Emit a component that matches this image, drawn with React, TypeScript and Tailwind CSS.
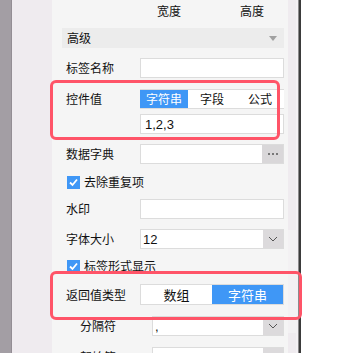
import type { ReactNode } from 'react'

function Chevron() {
  return (
    <svg width="10" height="6" viewBox="0 0 10 6" fill="none">
      <path d="M1 1l4 4 4-4" stroke="#555" strokeWidth="1" />
    </svg>
  )
}

function Row({ label, className, labelClass, children }: { label: string; className: string; labelClass: string; children: ReactNode }) {
  return (
    <div className={`flex items-center ${className}`}>
      <span className={`shrink-0 ${labelClass}`}>{label}</span>
      {children}
    </div>
  )
}

function Input({ text }: { text?: string }) {
  return (
    <div className="flex h-[20px] w-[144px] items-center border border-[#dcdcdc] bg-white pl-[4px] font-['Liberation_Sans',sans-serif] text-[13px]">
      {text}
    </div>
  )
}

function Select({ text, width }: { text: string; width: string }) {
  return (
    <div className={`flex h-[20px] items-stretch border border-[#dcdcdc] bg-white ${width}`}>
      <span className="flex flex-1 items-center pl-[2px] font-['Liberation_Sans',sans-serif] text-[13px]">{text}</span>
      <span className="flex w-[20px] items-center justify-center bg-[#dcdadc]">
        <Chevron />
      </span>
    </div>
  )
}

function Check({ label, className }: { label: string; className: string }) {
  return (
    <div className={`flex h-[24px] items-center pl-[5px] ${className}`}>
      <span className="flex h-[13px] w-[13px] items-center justify-center bg-[#3f97f6]">
        <svg width="11" height="11" viewBox="0 0 11 11" fill="none">
          <path d="M2 5.5l2.5 2.5L9 2.5" stroke="white" strokeWidth="1.8" />
        </svg>
      </span>
      <span className="ml-[4px]">{label}</span>
    </div>
  )
}

export default function App() {
  return (
    <div className="relative flex h-[353px] w-[357px] overflow-hidden bg-white font-['Noto_Sans_CJK_SC','Liberation_Sans',sans-serif] text-[12px] leading-none text-[#111]">
      <div className="w-[11px] bg-[#a39ea4]" />
      <div className="w-[1px] bg-[#938d94]" />
      <div className="w-[40px] bg-[#efebef]" />

      {/* property panel */}
      <div className="w-[236px] bg-[#f5f5f5] pl-[10px] pr-[4px]">
        <div className="flex h-[22px] items-center">
          <span className="ml-[95px]">宽度</span>
          <span className="ml-[59px]">高度</span>
        </div>

        <div className="mt-[6px] flex h-[20px] items-center justify-between bg-[#ececec] pl-[5px] pr-[7px]">
          <span>高级</span>
          <svg width="8" height="5" viewBox="0 0 8 5">
            <path d="M0 0h8L4 5z" fill="#a0a0a0" />
          </svg>
        </div>

        <Row label="标签名称" className="mt-[10px]" labelClass="w-[78px] pl-[4px]">
          <Input />
        </Row>

        <Row label="控件值" className="mt-[11px]" labelClass="w-[78px] pl-[4px]">
          <div className="grid h-[20px] w-[144px] grid-cols-3 border-y border-[#dcdcdc] bg-white">
            <span className="flex items-center justify-center bg-[#3f97f6] text-white">字符串</span>
            <span className="flex items-center justify-center">字段</span>
            <span className="flex items-center justify-center">公式</span>
          </div>
        </Row>

        <div className="mt-[5px] pl-[78px]">
          <Input text="1,2,3" />
        </div>

        <Row label="数据字典" className="mt-[10px]" labelClass="w-[78px] pl-[4px]">
          <div className="flex h-[20px] w-[144px] border border-[#dcdcdc] bg-white">
            <span className="flex-1" />
            <span className="flex w-[21px] items-center justify-center gap-[2px] bg-[#d9d7d9]">
              <span className="h-[2px] w-[2px] bg-[#777]" />
              <span className="h-[2px] w-[2px] bg-[#777]" />
              <span className="h-[2px] w-[2px] bg-[#777]" />
            </span>
          </div>
        </Row>

        <Check label="去除重复项" className="mt-[6px]" />

        <Row label="水印" className="mt-[5px]" labelClass="w-[78px] pl-[4px]">
          <Input />
        </Row>

        <Row label="字体大小" className="mt-[10px]" labelClass="w-[78px] pl-[4px]">
          <Select text="12" width="w-[144px]" />
        </Row>

        <Check label="标签形式显示" className="mt-[5px]" />

        <Row label="返回值类型" className="mt-[6px]" labelClass="w-[78px] pl-[4px]">
          <div className="grid h-[21px] w-[144px] grid-cols-2 border border-[#dcdcdc] bg-white text-[13px]">
            <span className="flex items-center justify-center">数组</span>
            <span className="flex items-center justify-center bg-[#3f97f6] text-white">字符串</span>
          </div>
        </Row>

        <Row label="分隔符" className="mt-[11px]" labelClass="w-[90px] pl-[18px]">
          <Select text="," width="w-[132px]" />
        </Row>

        <Row label="起始符" className="mt-[11px]" labelClass="w-[90px] pl-[18px]">
          <Select text="" width="w-[132px]" />
        </Row>
      </div>

      {/* scrollbar + window edge */}
      <div className="flex w-[8px] flex-col bg-[#efebef]">
        <div className="h-[230px] shrink-0" />
        <div className="h-[103px] shrink-0 bg-[#f3f1f3]" />
      </div>
      <div className="w-[2px] bg-[#f3f0f3]" />
      <div className="w-[1px] bg-[#8c8a8c]" />
      <div className="w-[2px] bg-[#3b3b3b]" />
      <div className="flex-1 bg-white" />

      {/* highlight annotations */}
      <div className="absolute left-[50px] top-[80px] h-[60px] w-[230px] rounded-[6px] border-[3px] border-[#ff5468]" />
      <div className="absolute left-[50px] top-[271px] h-[49px] w-[252px] rounded-[6px] border-[3px] border-[#ff5468]" />
    </div>
  )
}
